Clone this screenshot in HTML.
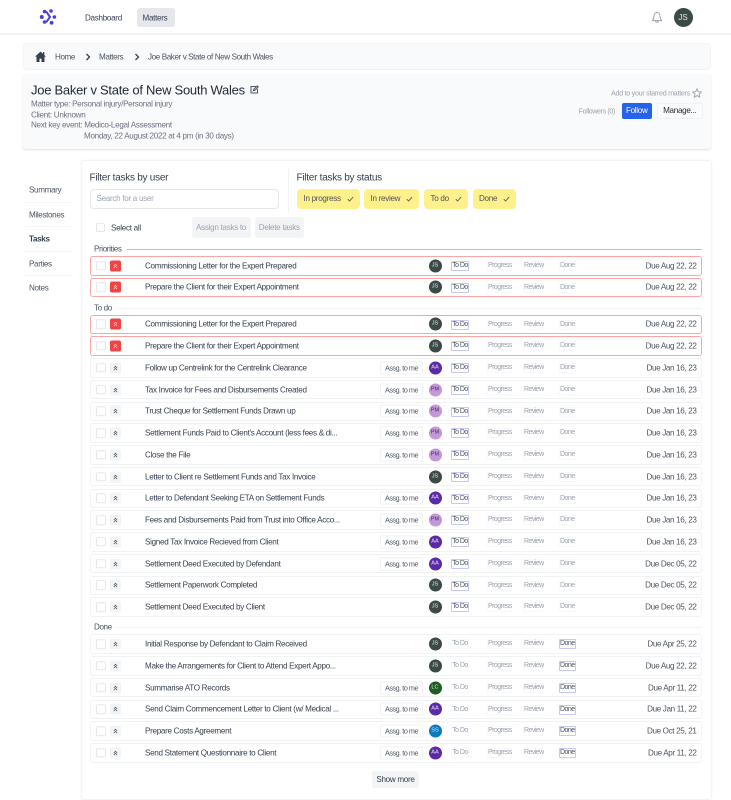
<!DOCTYPE html>
<html lang="en"><head><meta charset="utf-8"><title>Joe Baker v State of New South Wales</title>
<style>
*{box-sizing:border-box}
html,body{margin:0;padding:0;background:#fff}
body{width:731px;height:793px;position:relative;overflow:hidden;font-family:"Liberation Sans",sans-serif;font-size:8.1px;letter-spacing:-.3px;color:#374151}
.x{position:absolute;white-space:nowrap}
.m{transform:translateY(-50%)}
.r{position:absolute;left:89.5px;width:612px;height:19.5px;border:1px solid #f1f2f4;border-radius:3px;background:#fff}
.r.p{border-color:#fca5a5}
.r>*{position:absolute;top:50%;transform:translateY(-50%);white-space:nowrap;font-style:normal;font-weight:400}
.c{left:5.5px;width:9.5px;height:9.5px;border:1px solid #e5e7eb;border-radius:1.5px;background:#fff}
.u{left:19.5px;width:11px;height:11px;border-radius:2px;background:#f3f4f6;display:block}
.u svg{position:absolute;left:3px;top:3px;width:5px;height:5px;fill:none;stroke:#4b5563;stroke-width:.9}
.p .u{background:#ef4444}
.p .u svg{stroke:#fecaca}
.t{left:54.5px;color:#374151}
.a{left:289.5px;width:43px;height:13px;border:1px solid #f1f2f4;border-radius:1px;text-align:center;line-height:11px;font-size:7.2px;letter-spacing:-.45px;color:#4b5563}
.v{left:338px;width:13px;height:13px;border-radius:50%;text-align:center;line-height:13px;font-size:5.6px;letter-spacing:0;color:#e5e7eb}
.js{background:#3b4a46}.aa{background:#5b2aa6}.pm{background:#c697d8;color:#44305a}.lc{background:#1b5e20}.ss{background:#0c7abf}
.r>.s{top:4px;transform:none;height:10px;line-height:8px;font-size:7px;letter-spacing:-.55px;color:#9ca3af;border:1px solid #f8f8fe;text-align:center;border-radius:1px}
.r>.s.on{border-color:#c7c7f5;color:#4b5563}
.s1{left:360.5px;width:18px}.s2{left:396.5px;width:25px}.s3{left:432.5px;width:20px}.s4{left:468.5px;width:16.5px}
.d{right:4px;letter-spacing:-.35px;color:#4b5563}
.g{position:absolute;height:1px}
.l{color:#4b5563;letter-spacing:-.4px}
.chip{position:absolute;top:189px;height:19.5px;background:#fef08a;border-radius:4px;color:#52525b;line-height:19.5px;padding-left:6.5px}
.chip svg{position:absolute;top:7px;right:6px;width:7px;height:6px}
.nav{position:absolute;left:29px;transform:translateY(-50%);color:#4b5563;letter-spacing:-.35px}
.sep{position:absolute;left:23px;width:49px;height:1px;background:#f3f4f6}
.btn{position:absolute;background:#f3f4f6;border-radius:3px;color:#9ca3af;text-align:center}
.f{font-size:10px;letter-spacing:-.26px;color:#374151}
</style></head><body>
<svg width="0" height="0" style="position:absolute"><defs>
<symbol id="q" viewBox="0 0 6 6"><path d="M1 3 3 1 5 3M1 5.5 3 3.5 5 5.5"/></symbol>
<symbol id="k" viewBox="0 0 7 6"><path d="M.8 3.2 2.6 5 6.2 1" fill="none" stroke="#52525b" stroke-width=".85"/></symbol>
</defs></svg>

<!-- top bar -->
<div style="position:absolute;left:0;top:0;width:731px;height:35px;border-bottom:2px solid #f1f2f4"></div>
<svg style="position:absolute;left:39px;top:8px" width="18" height="18" viewBox="0 0 18 18" fill="#4a3fd8"><circle cx="2.8" cy="9" r="2"/><circle cx="5.6" cy="3.6" r="1.8"/><circle cx="12" cy="3" r="1.8"/><circle cx="15.4" cy="9" r="1.8"/><circle cx="12.6" cy="14.8" r="1.9"/><circle cx="5.6" cy="14" r="1.8"/><path d="M7.2 3.6 11 9 7.2 14.2" fill="none" stroke="#4a3fd8" stroke-width="2"/></svg>
<div class="x m" style="left:85px;top:17.5px;color:#374151">Dashboard</div>
<div style="position:absolute;left:136.5px;top:8px;width:38.5px;height:19px;background:#e5e7eb;border-radius:3px"></div>
<div class="x m" style="left:142.5px;top:17.5px;color:#374151">Matters</div>
<svg style="position:absolute;left:651px;top:11px" width="12" height="13" viewBox="0 0 12 13" fill="none" stroke="#9ca3af" stroke-width="1"><path d="M6 1.5C3.8 1.5 3 3.4 3 5.2 3 7.8 2 8.7 1.4 9.6H10.6C10 8.7 9 7.8 9 5.2 9 3.4 8.2 1.5 6 1.5ZM4.6 10.2C4.8 11.6 7.2 11.6 7.4 10.2M6 .6V1.5"/></svg>
<div class="x" style="left:673.5px;top:8px;width:19px;height:19px;border-radius:50%;background:#3b4a46;color:#e5e7eb;text-align:center;line-height:19px;font-size:8px;letter-spacing:0">JS</div>

<!-- breadcrumb -->
<div style="position:absolute;left:23px;top:43px;width:688px;height:27px;background:#f9fafb;border:1px solid #f1f3f5;border-radius:4px"></div>
<svg style="position:absolute;left:34.5px;top:51px" width="11" height="11" viewBox="0 0 11 11" fill="#374151"><path d="M5.5.6 0 5.6h1.5V11h3V7.6h2V11h3V5.6H11L9.3 4V1H8v1.8Z"/></svg>
<div class="x m l" style="left:55px;top:57px">Home</div>
<svg style="position:absolute;left:85px;top:53px" width="6" height="8" viewBox="0 0 6 8" fill="none" stroke="#374151" stroke-width="1.3"><path d="M1.5 1 4.5 4 1.5 7"/></svg>
<div class="x m l" style="left:99px;top:57px">Matters</div>
<svg style="position:absolute;left:134px;top:53px" width="6" height="8" viewBox="0 0 6 8" fill="none" stroke="#374151" stroke-width="1.3"><path d="M1.5 1 4.5 4 1.5 7"/></svg>
<div class="x m l" style="left:148px;top:57px">Joe Baker v State of New South Wales</div>

<!-- matter card -->
<div style="position:absolute;left:23px;top:74px;width:688px;height:75px;background:#f9fafb;border-radius:3px;box-shadow:0 1px 2px rgba(0,0,0,.12)"></div>
<div class="x m" style="left:31px;top:89.5px;font-size:13px;letter-spacing:-.27px;color:#1f2937">Joe Baker v State of New South Wales</div>
<svg style="position:absolute;left:250px;top:85px" width="9" height="9" viewBox="0 0 9 9" fill="none" stroke="#4b5563" stroke-width="1"><path d="M6.5 1.5H1v6.5h6.5V4M3.5 5.6 3.8 4.2 7.3.9l1 1L4.9 5.3Z"/></svg>
<div class="x m" style="left:31px;top:103.5px;color:#6b7280">Matter type: Personal injury/Personal injury</div>
<div class="x m" style="left:31px;top:114.5px;color:#6b7280">Client: Unknown</div>
<div class="x m" style="left:31px;top:125px;color:#6b7280">Next key event: Medico-Legal Assessment</div>
<div class="x m" style="left:84px;top:136px;color:#6b7280">Monday, 22 August 2022 at 4 pm (in 30 days)</div>
<div class="x m" style="right:41px;top:92.5px;font-size:7.2px;color:#9ca3af">Add to your starred matters</div>
<svg style="position:absolute;left:692px;top:88px" width="10" height="10" viewBox="0 0 10 10" fill="none" stroke="#9ca3af" stroke-width=".9"><path d="M5 .8 6.2 3.7 9.4 4 7 6 7.7 9.1 5 7.5 2.3 9.1 3 6 .6 4 3.8 3.7Z"/></svg>
<div class="x m" style="right:116px;top:111px;font-size:7.2px;letter-spacing:-.4px;color:#9ca3af">Followers (0)</div>
<div class="x" style="left:621.5px;top:102.5px;width:30.5px;height:16px;background:#2563eb;border-radius:2px;color:#fff;text-align:center;line-height:16px">Follow</div>
<div class="x" style="left:656.5px;top:102.5px;width:46.5px;height:16px;background:#fbfbfc;border:1px solid #f1f2f4;border-radius:2px;color:#1f2937;text-align:center;line-height:14px">Manage...</div>

<!-- side nav -->
<div class="nav" style="top:190px">Summary</div><div class="sep" style="top:201.5px"></div>
<div class="nav" style="top:214.5px">Milestones</div><div class="sep" style="top:226px"></div>
<div class="nav" style="top:239px;color:#374151;font-weight:700">Tasks</div><div class="sep" style="top:250.5px"></div>
<div class="nav" style="top:263.5px">Parties</div><div class="sep" style="top:275px"></div>
<div class="nav" style="top:288px">Notes</div>

<!-- main panel -->
<div style="position:absolute;left:80.5px;top:160px;width:631px;height:640px;background:#fff;border:1px solid #f3f4f6;border-radius:3px;box-shadow:0 0 2px rgba(0,0,0,.05)"></div>
<div class="x m f" style="left:89.5px;top:177.5px">Filter tasks by user</div>
<div class="x" style="left:89.5px;top:188.5px;width:189px;height:20px;border:1px solid #e5e7eb;border-radius:4px;background:#fff;color:#9ca3af;line-height:18px;padding-left:6px">Search for a user</div>
<div class="g" style="left:287.5px;top:169px;width:1px;height:44px;background:#f1f2f4"></div>
<div class="x m f" style="left:296.5px;top:177.5px">Filter tasks by status</div>
<div class="chip" style="left:297px;width:62.5px">In progress<svg><use href="#k"/></svg></div>
<div class="chip" style="left:364px;width:55px">In review<svg><use href="#k"/></svg></div>
<div class="chip" style="left:424px;width:43.5px">To do<svg><use href="#k"/></svg></div>
<div class="chip" style="left:472.5px;width:43.5px">Done<svg><use href="#k"/></svg></div>
<div style="position:absolute;left:96px;top:223px;width:9px;height:9px;border:1px solid #e5e7eb;border-radius:1.5px"></div>
<div class="x m" style="left:111px;top:228px;color:#374151">Select all</div>
<div class="btn" style="left:191.5px;top:217px;width:59px;height:21px;line-height:21px">Assign tasks to</div>
<div class="btn" style="left:254.5px;top:217px;width:49.5px;height:21px;line-height:21px">Delete tasks</div>

<div class="x m l" style="left:94px;top:248.5px">Priorities</div>
<div class="g" style="left:127px;top:248.5px;width:575px;background:#fca5a5"></div>

<div class="r p" style="top:256px"><i class="c"></i><i class="u"><svg><use href="#q"/></svg></i><span class="t">Commissioning Letter for the Expert Prepared</span><i class="v js">JS</i><span class="s s1 on">To Do</span><span class="s s2">Progress</span><span class="s s3">Review</span><span class="s s4">Done</span><span class="d">Due Aug 22, 22</span></div>
<div class="r p" style="top:277.5px"><i class="c"></i><i class="u"><svg><use href="#q"/></svg></i><span class="t">Prepare the Client for their Expert Appointment</span><i class="v js">JS</i><span class="s s1 on">To Do</span><span class="s s2">Progress</span><span class="s s3">Review</span><span class="s s4">Done</span><span class="d">Due Aug 22, 22</span></div>

<div class="x m l" style="left:94px;top:307.5px">To do</div>
<div class="g" style="left:118px;top:307.5px;width:584px;background:#f3f4f6"></div>

<div class="r p" style="top:314.5px"><i class="c"></i><i class="u"><svg><use href="#q"/></svg></i><span class="t">Commissioning Letter for the Expert Prepared</span><i class="v js">JS</i><span class="s s1 on">To Do</span><span class="s s2">Progress</span><span class="s s3">Review</span><span class="s s4">Done</span><span class="d">Due Aug 22, 22</span></div>
<div class="r p" style="top:336px"><i class="c"></i><i class="u"><svg><use href="#q"/></svg></i><span class="t">Prepare the Client for their Expert Appointment</span><i class="v js">JS</i><span class="s s1 on">To Do</span><span class="s s2">Progress</span><span class="s s3">Review</span><span class="s s4">Done</span><span class="d">Due Aug 22, 22</span></div>

<div class="r" style="top:358px"><i class="c"></i><i class="u"><svg><use href="#q"/></svg></i><span class="t">Follow up Centrelink for the Centrelink Clearance</span><span class="a">Assg. to me</span><i class="v aa">AA</i><span class="s s1 on">To Do</span><span class="s s2">Progress</span><span class="s s3">Review</span><span class="s s4">Done</span><span class="d">Due Jan 16, 23</span></div>
<div class="r" style="top:379.75px"><i class="c"></i><i class="u"><svg><use href="#q"/></svg></i><span class="t">Tax Invoice for Fees and Disbursements Created</span><span class="a">Assg. to me</span><i class="v pm">PM</i><span class="s s1 on">To Do</span><span class="s s2">Progress</span><span class="s s3">Review</span><span class="s s4">Done</span><span class="d">Due Jan 16, 23</span></div>
<div class="r" style="top:401.5px"><i class="c"></i><i class="u"><svg><use href="#q"/></svg></i><span class="t">Trust Cheque for Settlement Funds Drawn up</span><span class="a">Assg. to me</span><i class="v pm">PM</i><span class="s s1 on">To Do</span><span class="s s2">Progress</span><span class="s s3">Review</span><span class="s s4">Done</span><span class="d">Due Jan 16, 23</span></div>
<div class="r" style="top:423.25px"><i class="c"></i><i class="u"><svg><use href="#q"/></svg></i><span class="t">Settlement Funds Paid to Client's Account (less fees &amp; di...</span><span class="a">Assg. to me</span><i class="v pm">PM</i><span class="s s1 on">To Do</span><span class="s s2">Progress</span><span class="s s3">Review</span><span class="s s4">Done</span><span class="d">Due Jan 16, 23</span></div>
<div class="r" style="top:445px"><i class="c"></i><i class="u"><svg><use href="#q"/></svg></i><span class="t">Close the File</span><span class="a">Assg. to me</span><i class="v pm">PM</i><span class="s s1 on">To Do</span><span class="s s2">Progress</span><span class="s s3">Review</span><span class="s s4">Done</span><span class="d">Due Jan 16, 23</span></div>
<div class="r" style="top:466.75px"><i class="c"></i><i class="u"><svg><use href="#q"/></svg></i><span class="t">Letter to Client re Settlement Funds and Tax Invoice</span><i class="v js">JS</i><span class="s s1 on">To Do</span><span class="s s2">Progress</span><span class="s s3">Review</span><span class="s s4">Done</span><span class="d">Due Jan 16, 23</span></div>
<div class="r" style="top:488.5px"><i class="c"></i><i class="u"><svg><use href="#q"/></svg></i><span class="t">Letter to Defendant Seeking ETA on Settlement Funds</span><span class="a">Assg. to me</span><i class="v aa">AA</i><span class="s s1 on">To Do</span><span class="s s2">Progress</span><span class="s s3">Review</span><span class="s s4">Done</span><span class="d">Due Jan 16, 23</span></div>
<div class="r" style="top:510.25px"><i class="c"></i><i class="u"><svg><use href="#q"/></svg></i><span class="t">Fees and Disbursements Paid from Trust into Office Acco...</span><span class="a">Assg. to me</span><i class="v pm">PM</i><span class="s s1 on">To Do</span><span class="s s2">Progress</span><span class="s s3">Review</span><span class="s s4">Done</span><span class="d">Due Jan 16, 23</span></div>
<div class="r" style="top:532px"><i class="c"></i><i class="u"><svg><use href="#q"/></svg></i><span class="t">Signed Tax Invoice Recieved from Client</span><span class="a">Assg. to me</span><i class="v aa">AA</i><span class="s s1 on">To Do</span><span class="s s2">Progress</span><span class="s s3">Review</span><span class="s s4">Done</span><span class="d">Due Jan 16, 23</span></div>
<div class="r" style="top:553.75px"><i class="c"></i><i class="u"><svg><use href="#q"/></svg></i><span class="t">Settlement Deed Executed by Defendant</span><span class="a">Assg. to me</span><i class="v aa">AA</i><span class="s s1 on">To Do</span><span class="s s2">Progress</span><span class="s s3">Review</span><span class="s s4">Done</span><span class="d">Due Dec 05, 22</span></div>
<div class="r" style="top:575.5px"><i class="c"></i><i class="u"><svg><use href="#q"/></svg></i><span class="t">Settlement Paperwork Completed</span><i class="v js">JS</i><span class="s s1 on">To Do</span><span class="s s2">Progress</span><span class="s s3">Review</span><span class="s s4">Done</span><span class="d">Due Dec 05, 22</span></div>
<div class="r" style="top:597.25px"><i class="c"></i><i class="u"><svg><use href="#q"/></svg></i><span class="t">Settlement Deed Executed by Client</span><i class="v js">JS</i><span class="s s1 on">To Do</span><span class="s s2">Progress</span><span class="s s3">Review</span><span class="s s4">Done</span><span class="d">Due Dec 05, 22</span></div>

<div class="x m l" style="left:94px;top:626.5px">Done</div>
<div class="g" style="left:115px;top:626.5px;width:587px;background:#f3f4f6"></div>

<div class="r" style="top:634.25px"><i class="c"></i><i class="u"><svg><use href="#q"/></svg></i><span class="t">Initial Response by Defendant to Claim Received</span><i class="v js">JS</i><span class="s s1">To Do</span><span class="s s2">Progress</span><span class="s s3">Review</span><span class="s s4 on">Done</span><span class="d">Due Apr 25, 22</span></div>
<div class="r" style="top:656px"><i class="c"></i><i class="u"><svg><use href="#q"/></svg></i><span class="t">Make the Arrangements for Client to Attend Expert Appo...</span><i class="v js">JS</i><span class="s s1">To Do</span><span class="s s2">Progress</span><span class="s s3">Review</span><span class="s s4 on">Done</span><span class="d">Due Aug 22, 22</span></div>
<div class="r" style="top:677.75px"><i class="c"></i><i class="u"><svg><use href="#q"/></svg></i><span class="t">Summarise ATO Records</span><span class="a">Assg. to me</span><i class="v lc">LC</i><span class="s s1">To Do</span><span class="s s2">Progress</span><span class="s s3">Review</span><span class="s s4 on">Done</span><span class="d">Due Apr 11, 22</span></div>
<div class="r" style="top:699.5px"><i class="c"></i><i class="u"><svg><use href="#q"/></svg></i><span class="t">Send Claim Commencement Letter to Client (w/ Medical ...</span><span class="a">Assg. to me</span><i class="v aa">AA</i><span class="s s1">To Do</span><span class="s s2">Progress</span><span class="s s3">Review</span><span class="s s4 on">Done</span><span class="d">Due Jan 11, 22</span></div>
<div class="r" style="top:721.25px"><i class="c"></i><i class="u"><svg><use href="#q"/></svg></i><span class="t">Prepare Costs Agreement</span><span class="a">Assg. to me</span><i class="v ss">SS</i><span class="s s1">To Do</span><span class="s s2">Progress</span><span class="s s3">Review</span><span class="s s4 on">Done</span><span class="d">Due Oct 25, 21</span></div>
<div class="r" style="top:743px"><i class="c"></i><i class="u"><svg><use href="#q"/></svg></i><span class="t">Send Statement Questionnaire to Client</span><span class="a">Assg. to me</span><i class="v aa">AA</i><span class="s s1">To Do</span><span class="s s2">Progress</span><span class="s s3">Review</span><span class="s s4 on">Done</span><span class="d">Due Apr 11, 22</span></div>

<div class="btn" style="left:372px;top:770.5px;width:47px;height:17px;line-height:17px;color:#374151">Show more</div>
</body></html>
